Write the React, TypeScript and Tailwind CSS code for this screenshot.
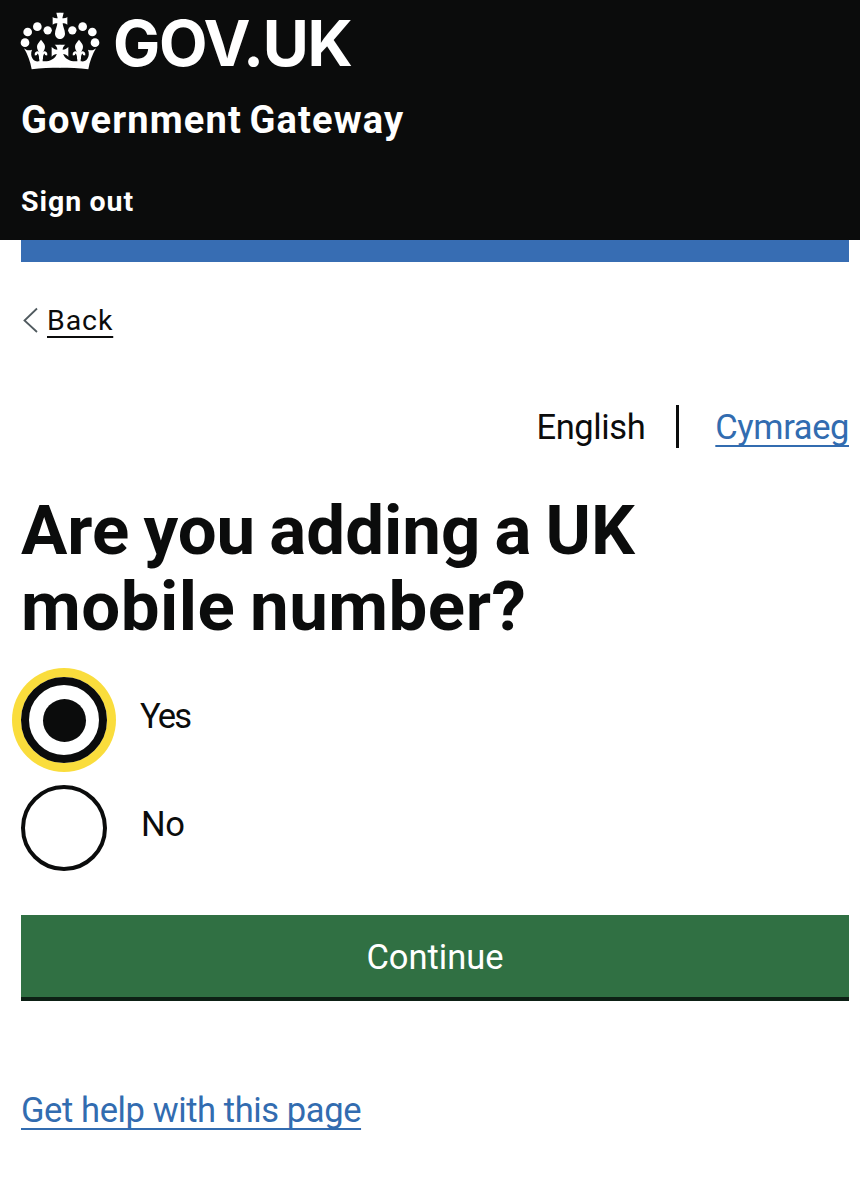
import React from 'react';
import { clsx } from 'clsx';

// left side of the crown, mirrored for the right
const CrownHalf = () => (
  <>
    <circle cx="75" cy="128" r="13" />
    <circle cx="83" cy="96" r="13" />
    <circle cx="112" cy="80" r="13" />
    <circle cx="143" cy="91" r="12.5" />
    <path d="M72 145c6 6 15 8 24 4-4 10-3 20 2 27 4 7 11 9 18 8h18c16 0 33-8 38-26h9v45c-30 0-58 1-86 5-4-23-12-44-23-63z" />
    <path d="M123 119c7 8 12 14 12 21 0 7-4 12-7 19v28h-10v-28c-3-7-7-12-7-19 0-7 5-13 12-21z" />
    <path d="M108 166c-2-9 6-11 9-6 3 4 4 10 4 18M138 166c2-9-6-11-9-6-3 4-4 10-4 18" fill="none" stroke="currentColor" strokeWidth="7" />
    <path d="M181 134h-17c5 4 8 9 8 15-7 0-12-3-17-8v29c5-5 9-8 17-8h9z" />
    <path d="M181 38h-12l4 17c-6 0-11-1-15-4v23c4-3 9-4 14-4 0 9-7 20-7 31 0 9 7 16 16 16z" />
  </>
);

const Crown = () => (
  <svg viewBox="60 36 240 174" className="w-20 h-[58px] shrink-0" fill="currentColor" aria-hidden="true">
    <CrownHalf />
    <g transform="translate(360 0) scale(-1 1)">
      <CrownHalf />
    </g>
  </svg>
);

const RadioItem = ({ label, checked, focused }: { label: string; checked?: boolean; focused?: boolean }) => (
  <label className="flex items-center gap-[34px]">
    <span
      className={clsx(
        'flex items-center justify-center w-[86px] h-[86px] rounded-full border-[#0b0c0c]',
        focused ? 'border-[8.5px] ring-[9px] ring-[#fadd3c]' : 'border-[4px]'
      )}
    >
      {checked && <span className="w-[43px] h-[43px] rounded-full bg-[#0b0c0c]" />}
    </span>
    <span className={clsx('pb-2 text-[34.5px] leading-[43px]', checked ? '-ml-px tracking-[-1.8px]' : 'tracking-[-0.4px]')}>
      {label}
    </span>
  </label>
);

export default function App() {
  return (
    <div className="w-[860px] h-[1200px] overflow-hidden bg-white text-[#0b0c0c] font-['Roboto',sans-serif] whitespace-nowrap">
      <header className="h-60 bg-[#0b0c0c] text-white px-5 pt-3">
        <div className="flex items-center h-[58px]">
          <Crown />
          <span className="ml-[13px] mt-1 font-['Inter',sans-serif] text-[63px] leading-[64px] tracking-[-1.4px] font-bold">
            GOV.UK
          </span>
        </div>
        <div className="mt-[30px] ml-px text-[38px] leading-10 font-bold tracking-[1.15px] [word-spacing:-3px]">
          Government Gateway
        </div>
        <a className="block mt-[42px] ml-px text-[28.5px] leading-10 font-bold tracking-[1px] [word-spacing:-1px]">
          Sign out
        </a>
      </header>

      <div className="pl-[21px] pr-[11px]">
        <div className="h-[22px] bg-[#376db3]" />

        <a className="flex items-center mt-[38px] h-10">
          <svg viewBox="0 0 16 26" className="w-4 h-[26px] ml-0.5 mr-2" fill="none" stroke="#505a5f" strokeWidth="1.8">
            <path d="M14 1.5L1.5 13.5L14 25" />
          </svg>
          <span className="pt-0.5 text-[28.5px] leading-10 tracking-[0.9px] underline decoration-2 underline-offset-[6px] [text-decoration-skip-ink:none]">
            Back
          </span>
        </a>

        <nav className="flex items-center justify-end mt-[65px] h-[43px] text-[34.5px] leading-[43px] tracking-[-0.4px]">
          <span className="pt-0.5">English</span>
          <span className="ml-[31px] mr-9 w-[3px] h-[43px] bg-[#0b0c0c]" />
          <a className="pt-0.5 text-[#326cb0] underline decoration-2 underline-offset-[6px] [text-decoration-skip-ink:none]">
            Cymraeg
          </a>
        </nav>

        <h1 className="mt-[45px] text-[69px] leading-[76px] font-bold [word-spacing:-3px]">
          Are you adding a UK
          <br />
          <span className="tracking-[0.5px]">mobile number?</span>
        </h1>

        <div className="flex flex-col gap-[22px] mt-8">
          <RadioItem label="Yes" checked focused />
          <RadioItem label="No" />
        </div>

        <button className="block w-full h-[86px] mt-11 pt-1 bg-[#307043] border-b-4 border-[#0d2015] text-white text-[34.5px]">
          Continue
        </button>

        <a className="inline-block mt-[89px] text-[#326cb0] text-[34.5px] leading-10 tracking-[-0.4px] underline decoration-2 underline-offset-[6px] [text-decoration-skip-ink:none]">
          Get help with this page
        </a>
      </div>
    </div>
  );
}
